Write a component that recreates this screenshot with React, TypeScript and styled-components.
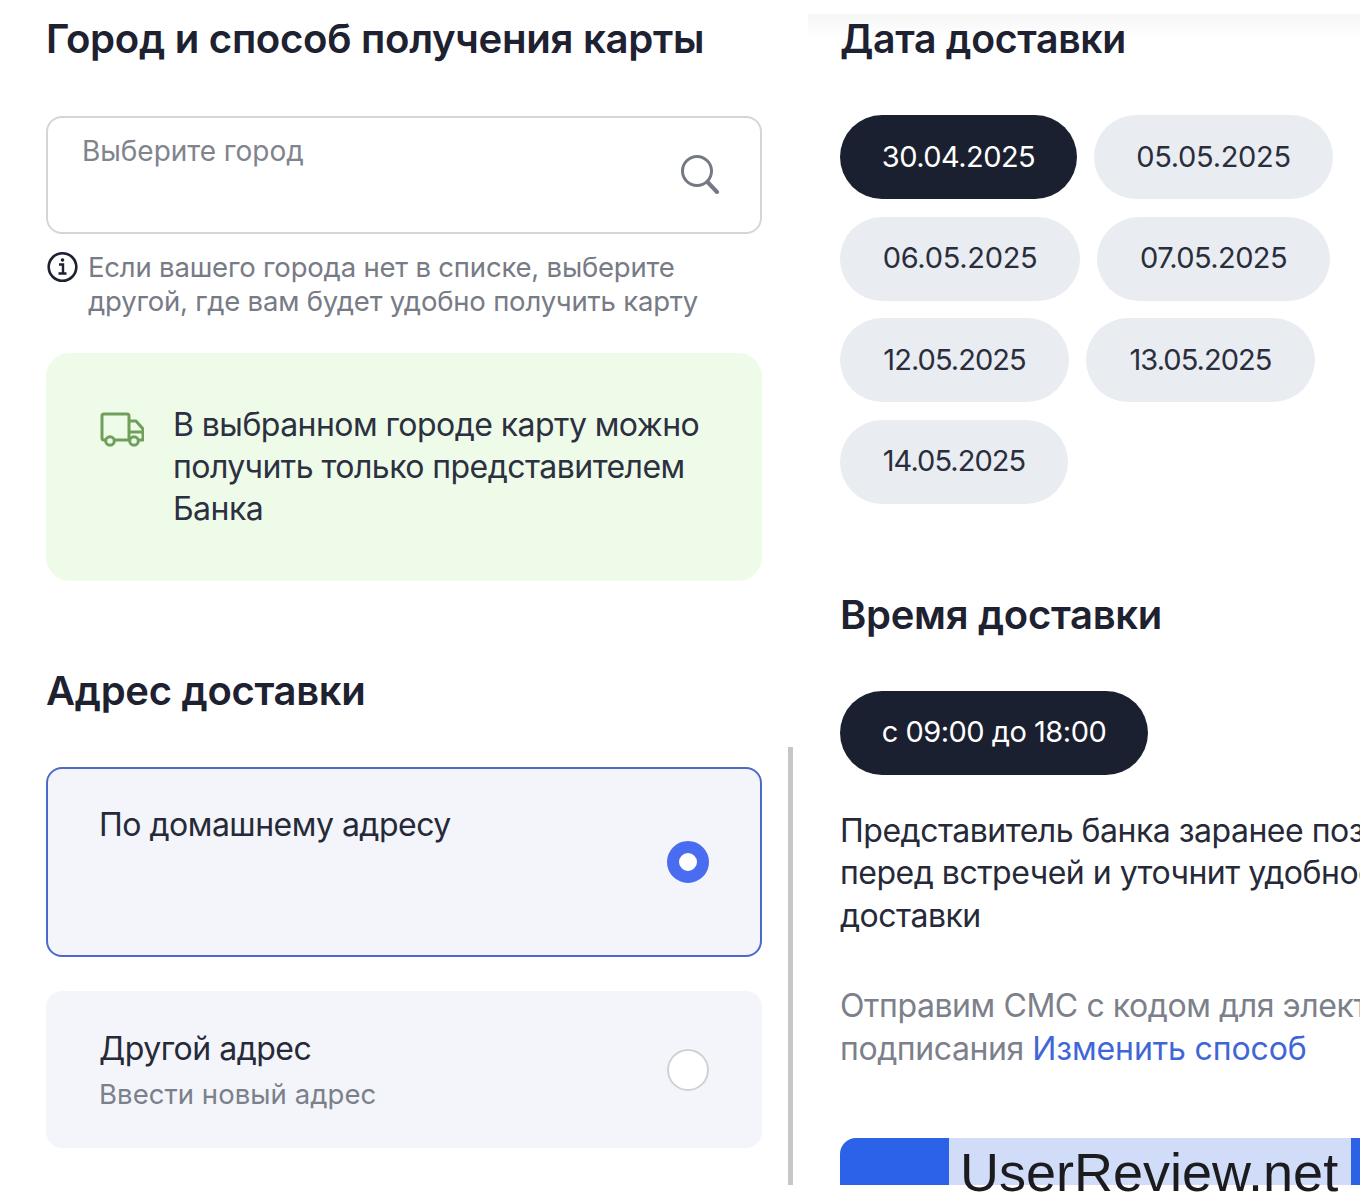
import React from "react";
import styled, { createGlobalStyle } from "styled-components";

const Global = createGlobalStyle`
  html, body { margin: 0; padding: 0; background: #fff; }
  body { font-family: Inter, "Noto Sans", sans-serif; color: #1d2130; }
  * { box-sizing: border-box; }
`;

const Page = styled.div`
  width: 1360px;
  height: 1200px;
  overflow: hidden;
  display: flex;
  padding: 0 0 15px 46px;
  background: #fff;
`;

const LeftColumn = styled.section`
  width: 716px;
  flex: none;
  display: flex;
  flex-direction: column;
  padding-top: 15px;
`;

const Divider = styled.div`
  width: 5px;
  height: 438px;
  flex: none;
  align-self: flex-end;
  margin-left: 26px;
  background: #c6c6c8;
`;

const RightColumn = styled.section`
  position: relative;
  width: 520px;
  flex: none;
  margin-left: 47px;
  padding-top: 15px;
  display: flex;
  flex-direction: column;
  &::before {
    content: "";
    position: absolute;
    top: 14px;
    left: -32px;
    width: 560px;
    height: 24px;
    background: linear-gradient(#f6f6f7, #ffffff);
  }
`;

const Title = styled.h2<{ $mt?: number; $size?: number }>`
  position: relative;
  margin: ${(p) => p.$mt ?? 0}px 0 0;
  font-size: ${(p) => p.$size ?? 40}px;
  line-height: 48px;
  font-weight: 600;
  letter-spacing: -0.3px;
  color: #1d2130;
  white-space: nowrap;
`;

const SearchBox = styled.div`
  margin-top: 53px;
  height: 118px;
  border: 2px solid #d3d5da;
  border-radius: 16px;
  display: flex;
  justify-content: space-between;
  padding: 15px 40px 0 34px;
`;

const Placeholder = styled.span`
  font-size: 28px;
  line-height: 36px;
  color: #80848d;
  letter-spacing: -0.05px;
`;

const SearchIcon = styled.svg`
  width: 40px;
  height: 40px;
  margin-top: 21px;
  flex: none;
`;

const Hint = styled.div`
  margin-top: 16px;
  display: flex;
  gap: 9px;
  font-size: 27.5px;
  line-height: 34px;
  color: #777b85;
  letter-spacing: -0.2px;
  white-space: nowrap;
`;

const HintIcon = styled.svg`
  width: 33px;
  height: 33px;
  flex: none;
`;

const Notice = styled.div`
  margin-top: 35px;
  height: 228px;
  border-radius: 24px;
  background: #eefbe8;
  display: flex;
  padding: 51px 0 0 54px;
  gap: 29px;
  font-size: 32px;
  line-height: 42px;
  color: #2c3040;
  letter-spacing: -0.55px;
  white-space: nowrap;
`;

const TruckIcon = styled.svg`
  width: 44px;
  height: 36px;
  flex: none;
  margin-top: 8px;
`;

const AddressCard = styled.div<{ $active?: boolean; $h: number; $mt: number }>`
  margin-top: ${(p) => p.$mt}px;
  height: ${(p) => p.$h}px;
  border-radius: 16px;
  background: #f3f5fa;
  border: ${(p) => (p.$active ? "2px solid #4c6bc9" : "none")};
  display: flex;
  align-items: center;
  justify-content: space-between;
  padding: 0 ${(p) => (p.$active ? 51 : 53)}px 0 ${(p) => (p.$active ? 51 : 53)}px;
`;

const CardText = styled.div<{ $top: number }>`
  align-self: flex-start;
  padding-top: ${(p) => p.$top}px;
  white-space: nowrap;
`;

const CardTitle = styled.div`
  font-size: 32px;
  line-height: 42px;
  color: #262a38;
  letter-spacing: -0.5px;
`;

const CardSub = styled.div`
  font-size: 27.5px;
  line-height: 36px;
  color: #7c808a;
  margin-top: 6px;
  letter-spacing: 0.05px;
`;

const Radio = styled.span<{ $on?: boolean }>`
  width: 42px;
  height: 42px;
  border-radius: 50%;
  flex: none;
  background: #fff;
  border: ${(p) => (p.$on ? "12px solid #4a6cf0" : "2px solid #cfd1d6")};
`;

const Pills = styled.div<{ $mt: number }>`
  margin-top: ${(p) => p.$mt}px;
  display: flex;
  flex-wrap: wrap;
  gap: 17.67px 17px;
  width: 500px;
`;

const Pill = styled.span<{ $on?: boolean; $w: number; $track: number }>`
  width: ${(p) => p.$w}px;
  height: 84px;
  padding-bottom: 2px;
  border-radius: 42px;
  display: inline-flex;
  align-items: center;
  justify-content: center;
  font-size: 29px;
  letter-spacing: ${(p) => p.$track}px;
  white-space: nowrap;
  background: ${(p) => (p.$on ? "#1b2030" : "#e9ecf1")};
  color: ${(p) => (p.$on ? "#ffffff" : "#2a2e3c")};
`;

const Paragraph = styled.p<{ $mt: number; $muted?: boolean }>`
  margin: ${(p) => p.$mt}px 0 0;
  font-size: 32px;
  line-height: 42.5px;
  letter-spacing: ${(p) => (p.$muted ? -0.42 : -0.5)}px;
  white-space: nowrap;
  color: ${(p) => (p.$muted ? "#7c808a" : "#262a38")};
`;

const TextLink = styled.span`
  color: #3f66d8;
  letter-spacing: -0.12px;
`;

const SubmitButton = styled.div`
  position: relative;
  margin-top: auto;
  width: 560px;
  height: 47px;
  flex: none;
  border-radius: 16px 0 0 0;
  background: #2b62e8;
`;

const Watermark = styled.div`
  position: absolute;
  left: 109px;
  top: 0;
  width: 402px;
  height: 47px;
  background: #d1dcf8;
  padding-left: 11px;
  font-family: "Liberation Sans", Arial, sans-serif;
  font-size: 54px;
  line-height: 68px;
  color: #1c1c1e;
  white-space: nowrap;
`;

const dates = [
  { label: "30.04.2025", w: 237, track: -0.55 },
  { label: "05.05.2025", w: 239, track: -0.3 },
  { label: "06.05.2025", w: 240, track: -0.3 },
  { label: "07.05.2025", w: 233, track: -0.6 },
  { label: "12.05.2025", w: 229, track: -0.95 },
  { label: "13.05.2025", w: 229, track: -0.95 },
  { label: "14.05.2025", w: 228, track: -0.95 },
];

export default function App() {
  return (
    <Page>
      <Global />
      <LeftColumn>
        <Title $size={40.15}>Город и способ получения карты</Title>
        <SearchBox>
          <Placeholder>Выберите город</Placeholder>
          <SearchIcon viewBox="0 0 40 40" fill="none" stroke="#757983" strokeWidth="3" strokeLinecap="round">
            <circle cx="17" cy="17" r="14.5" />
            <path d="M27.5 28 37 38" strokeWidth="4" />
          </SearchIcon>
        </SearchBox>
        <Hint>
          <HintIcon viewBox="0 0 33 33" fill="none" stroke="#1d2130" strokeWidth="2.6">
            <circle cx="16.5" cy="17" r="13.8" />
            <path d="M13 14.5h4v9M12.5 23.5h8" strokeWidth="2.4" />
            <circle cx="16.5" cy="10" r="1.8" fill="#1d2130" stroke="none" />
          </HintIcon>
          <span>
            Если вашего города нет в списке, выберите
            <br />
            другой, где вам будет удобно получить карту
          </span>
        </Hint>
        <Notice>
          <TruckIcon viewBox="0 0 44 36" fill="none" stroke="#6f9f5b" strokeWidth="3" strokeLinejoin="round">
            <path d="M5.5 28H4a2 2 0 0 1-2-2V4a2 2 0 0 1 2-2h23a2 2 0 0 1 2 2v24H14.5" />
            <path d="M29 9h7l7 8v11h-4.500M29 28h.5M29 20h14" />
            <circle cx="10" cy="29" r="4.300" />
            <circle cx="34" cy="29" r="4.300" />
          </TruckIcon>
          <span>
            В выбранном городе карту можно
            <br />
            получить только представителем
            <br />
            Банка
          </span>
        </Notice>
        <Title $mt={86}>Адрес доставки</Title>
        <AddressCard $active $h={190} $mt={52}>
          <CardText $top={35}>
            <CardTitle>По домашнему адресу</CardTitle>
          </CardText>
          <Radio $on />
        </AddressCard>
        <AddressCard $h={157} $mt={34}>
          <CardText $top={37}>
            <CardTitle>Другой адрес</CardTitle>
            <CardSub>Ввести новый адрес</CardSub>
          </CardText>
          <Radio />
        </AddressCard>
      </LeftColumn>
      <Divider />
      <RightColumn>
        <Title $size={39.2}>Дата доставки</Title>
        <Pills $mt={52}>
          {dates.map((d, i) => (
            <Pill key={d.label} $on={i === 0} $w={d.w} $track={d.track}>
              {d.label}
            </Pill>
          ))}
        </Pills>
        <Title $mt={87}>Время доставки</Title>
        <Pills $mt={52}>
          <Pill $on $w={308} $track={-0.5}>с 09:00 до 18:00</Pill>
        </Pills>
        <Paragraph $mt={35}>
          Представитель банка заранее позвонит
          <br />
          перед встречей и уточнит удобное время
          <br />
          доставки
        </Paragraph>
        <Paragraph $mt={48} $muted>
          Отправим СМС с кодом для электронного
          <br />
          подписания <TextLink>Изменить способ</TextLink>
        </Paragraph>
        <SubmitButton>
          <Watermark>UserReview.net</Watermark>
        </SubmitButton>
      </RightColumn>
    </Page>
  );
}
